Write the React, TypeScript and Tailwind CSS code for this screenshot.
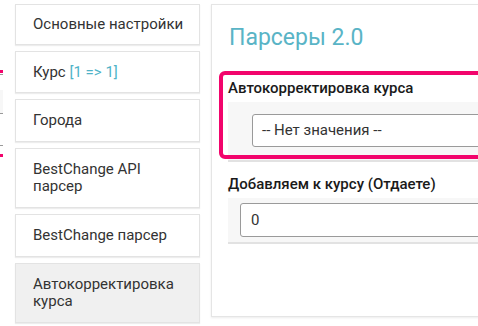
import React from 'react'

const menu = [
  { label: 'Основные настройки', h: 'h-[41px]' },
  { label: 'Курс', extra: '[1 => 1]', h: 'h-[42px]' },
  { label: 'Города', h: 'h-[43px]' },
  { label: 'BestChange API парсер', h: 'h-[60px]' },
  { label: 'BestChange парсер', h: 'h-[43px]' },
  { label: 'Автокорректировка курса', h: 'h-[60px]', active: true },
]

export default function App() {
  return (
    <div className="relative w-[478px] h-[326px] overflow-hidden bg-white text-[#333] font-['Roboto','Liberation_Sans',sans-serif]">
      <div className="flex items-start">
        {/* cut-off edge of the neighbouring frame */}
        <div className="w-[3px] shrink-0 flex flex-col">
          <div className="mt-[70px] h-[3px] bg-[#f2046c]" />
          <div className="mt-[1px] h-px bg-[#9a9a9a]" />
          <div className="mt-[15px] h-[23px] bg-[#f7f7f7]" />
          <div className="h-px bg-[#9a9a9a]" />
          <div className="mt-[31px] h-px bg-[#9a9a9a]" />
          <div className="mt-[8px] h-[3px] bg-[#f2046c]" />
        </div>

        {/* sidebar */}
        <div className="ml-[12px] mt-[4px] w-[185px] shrink-0 flex flex-col gap-[6px]">
          {menu.map((m) => (
            <div
              key={m.label}
              className={`${m.h} flex items-center border border-[#e3e3e3] shadow-[0_1px_1px_rgba(0,0,0,0.07)] pl-[17px] pr-[6px] text-[15px] leading-[17px] ${m.active ? 'bg-[#f0f0f0]' : 'bg-white'}`}
            >
              <span className={m.h === 'h-[60px]' ? 'max-w-[140px]' : ''}>
                {m.label}
                {m.extra && <span className="text-[#4fb3c8]"> {m.extra}</span>}
              </span>
            </div>
          ))}
        </div>

        {/* main panel */}
        <div className="ml-[11px] mt-[4px] w-[300px] shrink-0 h-[313px] border border-[#e5e5e5] shadow-[0_1px_2px_rgba(0,0,0,0.08)] pl-[16px] pt-[19px]">
          <div className="pl-[1px] text-[23px] leading-[28px] text-[#59b4c6]">Парсеры 2.0</div>

          <div className="mt-[26px] text-[15px] leading-[20px] font-medium text-[#1a1a1a]">Автокорректировка курса</div>
          <div className="mt-[4px] h-[60px] bg-[#f7f7f7] border-b-2 border-[#e2e2e2] pt-[12px] pl-[24px]">
            <div className="h-[33px] border border-[#9a9a9a] rounded-[3px] bg-white flex items-center pl-[9px] text-[15px] text-[#333]">
              -- Нет значения --
            </div>
          </div>

          <div className="mt-[12px] text-[15px] leading-[20px] font-medium text-[#1a1a1a]">Добавляем к курсу (Отдаете)</div>
          <div className="mt-[4px] h-[46px] bg-[#f7f7f7] border-b-2 border-[#e2e2e2] pt-[5px] pl-[12px]">
            <div className="h-[34px] border border-[#9a9a9a] rounded-[3px] bg-white flex items-center pl-[10px] text-[15px] text-[#333]">
              0
            </div>
          </div>
        </div>
      </div>

      {/* highlight annotation */}
      <div className="absolute left-[219px] top-[71px] w-[300px] h-[88px] border-4 border-[#f2046c] rounded-[6px]" />
    </div>
  )
}
